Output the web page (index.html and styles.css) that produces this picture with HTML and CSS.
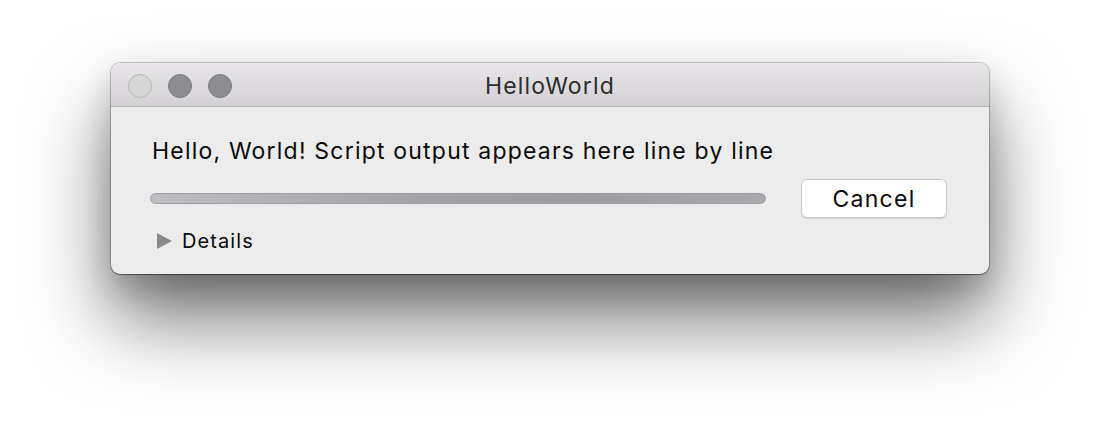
FILE: index.html
```html
<!DOCTYPE html>
<html>
<head>
<meta charset="utf-8">
<link rel="stylesheet" href="styles.css">
</head>
<body>
<div class="stage">
<div class="window">
  <div class="titlebar">
    <div class="lights">
      <span class="light close"></span>
      <span class="light"></span>
      <span class="light"></span>
    </div>
    <div class="title">HelloWorld</div>
  </div>
  <div class="content">
    <div class="message">Hello, World! Script output appears here line by line</div>
    <div class="progress-row">
      <div class="progress"></div>
      <button class="button">Cancel</button>
    </div>
    <div class="details">
      <span class="disclosure"></span>
      <span class="details-label">Details</span>
    </div>
  </div>
</div>
</div>
</body>
</html>
```
FILE: styles.css
```css
html, body {
  margin: 0;
  background: #ffffff;
}
body {
  font-family: Inter, "Liberation Sans", Arial, sans-serif;
  color: #111;
}
.stage {
  width: 1100px;
  height: 434px;
  box-sizing: border-box;
  padding: 63px 0 0 111px;
  overflow: hidden;
}
.window {
  width: 878px;
  height: 211px;
  box-sizing: border-box;
  border-radius: 9px;
  background: #ececec;
  overflow: hidden;
  box-shadow: 0 0 0 1px rgba(0,0,0,0.2), 0 1px 1px rgba(0,0,0,0.35), 0 16px 30px rgba(0,0,0,0.16), 0 45px 80px rgba(0,0,0,0.55);
  display: flex;
  flex-direction: column;
}
.titlebar {
  height: 44px;
  box-sizing: border-box;
  background: linear-gradient(#e9e7e9, #d2d0d2);
  border-bottom: 1px solid #b6b4b6;
  position: relative;
  display: flex;
  align-items: center;
  justify-content: center;
}
.lights {
  position: absolute;
  left: 17px;
  top: 11px;
  display: flex;
  gap: 16px;
}
.light {
  width: 22px;
  height: 22px;
  border-radius: 50%;
  background: #8e8d90;
  border: 1px solid #7b7a7d;
}
.light.close {
  background: #d7d6d7;
  border-color: #b4b3b4;
}
.title {
  font-size: 23px;
  letter-spacing: 1.2px;
  color: #2d2d2d;
  margin-top: 2px;
}
.content {
  padding: 30px 42px 0 39px;
  display: flex;
  flex-direction: column;
}
.message {
  font-size: 23px;
  letter-spacing: 1.2px;
  line-height: 28px;
  margin-left: 2px;
  color: #0a0a0a;
}
.progress-row {
  display: flex;
  align-items: center;
  gap: 35px;
  margin-top: 14px;
}
.progress {
  flex: 1;
  height: 11px;
  border-radius: 6px;
  box-sizing: border-box;
  background: linear-gradient(90deg, #bdbcc0 0%, #a3a2a7 45%, #9d9ca1 70%, #aaa9ad 100%);
  border: 1px solid #9f9ea3;
}
.button {
  width: 146px;
  height: 39px;
  border-radius: 6px;
  background: #ffffff;
  border: 1px solid #c9c9c9;
  box-shadow: 0 1px 1px rgba(0,0,0,0.12);
  font-family: Inter, "Liberation Sans", Arial, sans-serif;
  font-size: 23px;
  letter-spacing: 1.3px;
  color: #0a0a0a;
  padding: 0;
}
.details {
  display: flex;
  align-items: center;
  margin-top: 11px;
  margin-left: 7px;
}
.disclosure {
  width: 0;
  height: 0;
  border-left: 15px solid #8a8a8a;
  border-top: 8px solid transparent;
  border-bottom: 8px solid transparent;
  margin-right: 10px;
}
.details-label {
  font-size: 20px;
  letter-spacing: 1.1px;
  color: #0a0a0a;
}
```
